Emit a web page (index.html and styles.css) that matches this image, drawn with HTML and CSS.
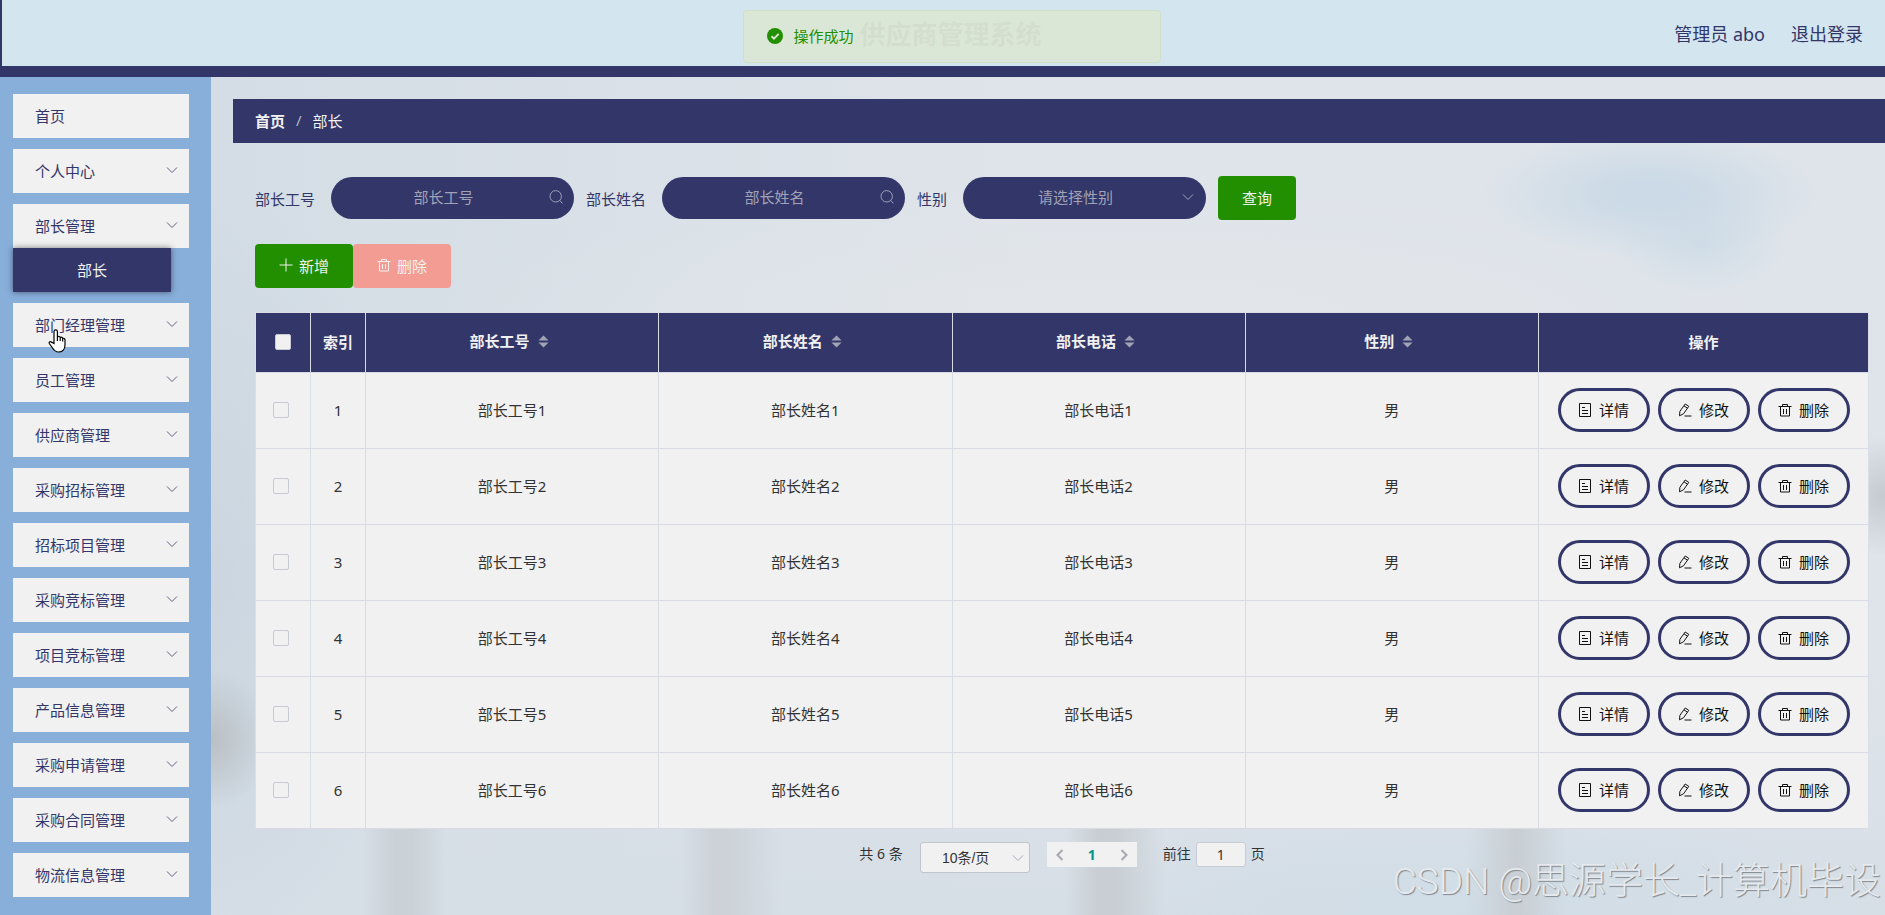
FILE: index.html
```html
<!DOCTYPE html>
<html lang="zh-CN">
<head>
  <meta charset="UTF-8">
  <title>供应商管理系统</title>
  <link rel="stylesheet" href="styles.css">
</head>
<body>
  <!-- icon sprite -->
  <svg class="sprite" aria-hidden="true">
    <symbol id="i-down" viewBox="0 0 14 14"><path d="M2 4.500l5 5 5-5"/></symbol>
    <symbol id="i-left" viewBox="0 0 14 14"><path d="M9.500 2l-5 5 5 5"/></symbol>
    <symbol id="i-right" viewBox="0 0 14 14"><path d="M4.500 2l5 5-5 5"/></symbol>
    <symbol id="i-search" viewBox="0 0 14 14"><circle cx="6.700" cy="6.300" r="5.700"/><path d="M10.800 10.400l2.600 3"/></symbol>
    <symbol id="i-plus" viewBox="0 0 14 14"><path d="M7 .5v13M.5 7h13"/></symbol>
    <symbol id="i-trash" viewBox="0 0 14 14"><path d="M.5 3.500h13M4.500 3.500v-2h5v2M2.500 3.500v9.500h9V3.500M5.500 6v5M8.500 6v5"/></symbol>
    <symbol id="i-doc" viewBox="0 0 14 14"><path d="M1.500 .5h11v13h-11zM4 4.500h3M4 7.500h6M4 10.500h6"/></symbol>
    <symbol id="i-edit" viewBox="0 0 14 14"><path d="M1.500 12.800l.4-4.500L7.200 1l3.600 2.300-5.300 7.500zM6 2.800l3.500 2.400M6.500 13h7"/></symbol>
    <symbol id="i-sort" viewBox="0 0 12 14"><path d="M6 .5l5.500 5.500H.5zM6 13.500L.5 8h11z"/></symbol>
  </svg>

  <header class="header">
    <h1 class="header-title">供应商管理系统</h1>
    <div class="header-user">
      <span>管理员 abo</span>
      <a href="#">退出登录</a>
    </div>
    <div class="message" role="alert">
      <svg class="message-icon" viewBox="0 0 16 16"><circle cx="8" cy="8" r="8"/><path d="M4.500 8.200l2.500 2.400 4.700-4.700"/></svg>
      <span>操作成功</span>
    </div>
  </header>

  <div class="layout">
    <nav class="sidebar">
      <a class="menu-item" href="#">首页</a>
      <a class="menu-item" href="#">个人中心<svg class="icon"><use href="#i-down"/></svg></a>
      <div class="menu-group">
        <a class="menu-item" href="#">部长管理<svg class="icon"><use href="#i-down"/></svg></a>
        <a class="submenu-item" href="#">部长</a>
      </div>
      <a class="menu-item" href="#">部门经理管理<svg class="icon"><use href="#i-down"/></svg></a>
      <a class="menu-item" href="#">员工管理<svg class="icon"><use href="#i-down"/></svg></a>
      <a class="menu-item" href="#">供应商管理<svg class="icon"><use href="#i-down"/></svg></a>
      <a class="menu-item" href="#">采购招标管理<svg class="icon"><use href="#i-down"/></svg></a>
      <a class="menu-item" href="#">招标项目管理<svg class="icon"><use href="#i-down"/></svg></a>
      <a class="menu-item" href="#">采购竞标管理<svg class="icon"><use href="#i-down"/></svg></a>
      <a class="menu-item" href="#">项目竞标管理<svg class="icon"><use href="#i-down"/></svg></a>
      <a class="menu-item" href="#">产品信息管理<svg class="icon"><use href="#i-down"/></svg></a>
      <a class="menu-item" href="#">采购申请管理<svg class="icon"><use href="#i-down"/></svg></a>
      <a class="menu-item" href="#">采购合同管理<svg class="icon"><use href="#i-down"/></svg></a>
      <a class="menu-item" href="#">物流信息管理<svg class="icon"><use href="#i-down"/></svg></a>
    </nav>

    <main class="main">
      <div class="breadcrumb">
        <a href="#">首页</a>
        <span class="separator">/</span>
        <span>部长</span>
      </div>

      <div class="content">
        <form class="search-form">
          <label for="gonghao">部长工号</label>
          <div class="field">
            <input type="text" id="gonghao" placeholder="部长工号">
            <svg class="icon"><use href="#i-search"/></svg>
          </div>
          <label for="xingming">部长姓名</label>
          <div class="field">
            <input type="text" id="xingming" placeholder="部长姓名">
            <svg class="icon"><use href="#i-search"/></svg>
          </div>
          <label for="xingbie">性别</label>
          <div class="field">
            <select id="xingbie">
              <option value="">请选择性别</option>
              <option>男</option>
              <option>女</option>
            </select>
            <svg class="icon"><use href="#i-down"/></svg>
          </div>
          <button type="button" class="btn btn-green">查询</button>
        </form>

        <div class="toolbar">
          <button type="button" class="btn btn-green"><svg class="icon"><use href="#i-plus"/></svg>新增</button>
          <button type="button" class="btn btn-red" disabled><svg class="icon"><use href="#i-trash"/></svg>删除</button>
        </div>

        <table class="table">
          <colgroup>
            <col class="col-small">
            <col class="col-small">
            <col>
            <col>
            <col>
            <col>
            <col class="col-actions">
          </colgroup>
          <thead>
            <tr>
              <th><input type="checkbox" aria-label="全选"></th>
              <th>索引</th>
              <th class="sortable">部长工号<svg class="sort"><use href="#i-sort"/></svg></th>
              <th class="sortable">部长姓名<svg class="sort"><use href="#i-sort"/></svg></th>
              <th class="sortable">部长电话<svg class="sort"><use href="#i-sort"/></svg></th>
              <th class="sortable">性别<svg class="sort"><use href="#i-sort"/></svg></th>
              <th>操作</th>
            </tr>
          </thead>
          <tbody>
            <tr>
              <td><input type="checkbox" aria-label="选择 1"></td>
              <td>1</td>
              <td>部长工号1</td>
              <td>部长姓名1</td>
              <td>部长电话1</td>
              <td>男</td>
              <td>
                <div class="actions">
                  <button type="button"><svg class="icon"><use href="#i-doc"/></svg>详情</button>
                  <button type="button"><svg class="icon"><use href="#i-edit"/></svg>修改</button>
                  <button type="button"><svg class="icon"><use href="#i-trash"/></svg>删除</button>
                </div>
              </td>
            </tr>
            <tr>
              <td><input type="checkbox" aria-label="选择 2"></td>
              <td>2</td>
              <td>部长工号2</td>
              <td>部长姓名2</td>
              <td>部长电话2</td>
              <td>男</td>
              <td>
                <div class="actions">
                  <button type="button"><svg class="icon"><use href="#i-doc"/></svg>详情</button>
                  <button type="button"><svg class="icon"><use href="#i-edit"/></svg>修改</button>
                  <button type="button"><svg class="icon"><use href="#i-trash"/></svg>删除</button>
                </div>
              </td>
            </tr>
            <tr>
              <td><input type="checkbox" aria-label="选择 3"></td>
              <td>3</td>
              <td>部长工号3</td>
              <td>部长姓名3</td>
              <td>部长电话3</td>
              <td>男</td>
              <td>
                <div class="actions">
                  <button type="button"><svg class="icon"><use href="#i-doc"/></svg>详情</button>
                  <button type="button"><svg class="icon"><use href="#i-edit"/></svg>修改</button>
                  <button type="button"><svg class="icon"><use href="#i-trash"/></svg>删除</button>
                </div>
              </td>
            </tr>
            <tr>
              <td><input type="checkbox" aria-label="选择 4"></td>
              <td>4</td>
              <td>部长工号4</td>
              <td>部长姓名4</td>
              <td>部长电话4</td>
              <td>男</td>
              <td>
                <div class="actions">
                  <button type="button"><svg class="icon"><use href="#i-doc"/></svg>详情</button>
                  <button type="button"><svg class="icon"><use href="#i-edit"/></svg>修改</button>
                  <button type="button"><svg class="icon"><use href="#i-trash"/></svg>删除</button>
                </div>
              </td>
            </tr>
            <tr>
              <td><input type="checkbox" aria-label="选择 5"></td>
              <td>5</td>
              <td>部长工号5</td>
              <td>部长姓名5</td>
              <td>部长电话5</td>
              <td>男</td>
              <td>
                <div class="actions">
                  <button type="button"><svg class="icon"><use href="#i-doc"/></svg>详情</button>
                  <button type="button"><svg class="icon"><use href="#i-edit"/></svg>修改</button>
                  <button type="button"><svg class="icon"><use href="#i-trash"/></svg>删除</button>
                </div>
              </td>
            </tr>
            <tr>
              <td><input type="checkbox" aria-label="选择 6"></td>
              <td>6</td>
              <td>部长工号6</td>
              <td>部长姓名6</td>
              <td>部长电话6</td>
              <td>男</td>
              <td>
                <div class="actions">
                  <button type="button"><svg class="icon"><use href="#i-doc"/></svg>详情</button>
                  <button type="button"><svg class="icon"><use href="#i-edit"/></svg>修改</button>
                  <button type="button"><svg class="icon"><use href="#i-trash"/></svg>删除</button>
                </div>
              </td>
            </tr>
          </tbody>
        </table>

        <div class="pagination">
          <span class="total">共 6 条</span>
          <div class="page-size">
            <select aria-label="每页条数">
              <option>10条/页</option>
              <option>20条/页</option>
            </select>
            <svg class="icon"><use href="#i-down"/></svg>
          </div>
          <div class="pager">
            <button type="button" aria-label="上一页" disabled><svg class="icon"><use href="#i-left"/></svg></button>
            <button type="button" class="current">1</button>
            <button type="button" aria-label="下一页" disabled><svg class="icon"><use href="#i-right"/></svg></button>
          </div>
          <div class="jump">
            <label for="page">前往</label>
            <input type="text" id="page" value="1">
            <span>页</span>
          </div>
        </div>
      </div>
    </main>
  </div>

  <div class="watermark">CSDN @思源学长_计算机毕设</div>

  <svg class="cursor" viewBox="0 0 18 24"><path d="M6 14.500V2.500a1.700 1.700 0 0 1 3.400 0V8c1-.9 2.500-.6 2.800.5 1-.6 2.300-.2 2.500.9 1-.4 2.300.1 2.300 1.600v5c0 4-2.500 7-6.500 7-3.500 0-4.800-2-6.300-4.500L1.300 14.500c-.6-1.100.6-2.300 1.800-1.600zM9.400 8v4M12.200 8.500V12M14.700 9.400V12.500"/></svg>
</body>
</html>
```

FILE: styles.css
```css
* {
  box-sizing: border-box;
}

body {
  margin: 0;
  min-height: 100vh;
  display: flex;
  flex-direction: column;
  font-family: "Noto Sans", "Noto Sans CJK SC", sans-serif;
  font-size: 15px;
  color: #333;
  overflow: hidden;
}

a {
  color: inherit;
  text-decoration: none;
}

button,
input,
select {
  font-family: inherit;
  font-size: inherit;
}

.sprite {
  display: none;
}

.icon {
  width: 14px;
  height: 14px;
  flex-shrink: 0;
  fill: none;
  stroke: currentColor;
}

/* header */
.header {
  position: relative;
  display: grid;
  grid-template-columns: 1fr auto 1fr;
  align-items: center;
  height: 77px;
  padding: 0 22px 0 36px;
  background: #d3e6f0;
  border-left: 2px solid #333668;
  border-bottom: 11px solid #333668;
  color: #333668;
}

.header-title {
  grid-column: 2;
  margin: 0;
  font-size: 26px;
  color: #8292a8;
}

.header-user {
  display: flex;
  justify-content: flex-end;
  gap: 26px;
  font-size: 18px;
}

.message {
  position: absolute;
  top: 10px;
  left: 0;
  right: 0;
  display: flex;
  align-items: center;
  gap: 11px;
  width: 418px;
  height: 53px;
  margin: 0 auto;
  padding: 0 23px 2px;
  border: 1px solid #cfe0c8;
  border-radius: 4px;
  background: rgba(220, 231, 211, 0.9);
  color: #218f00;
  translate: 8px;
}

.message-icon {
  width: 16px;
  height: 16px;
  fill: #218f00;
}

.message-icon path {
  fill: none;
  stroke: #dce7d3;
  stroke-width: 2;
}

.layout {
  flex: 1;
  display: flex;
}

/* sidebar */
.sidebar {
  display: flex;
  flex-direction: column;
  gap: 11px;
  width: 211px;
  flex-shrink: 0;
  padding: 17px 22px 17px 13px;
  background: #88aeda;
}

.menu-item {
  display: flex;
  align-items: center;
  justify-content: space-between;
  height: 44px;
  padding: 0 10px 2px 22px;
  background: #f1f1f1;
  color: #333668;
}

.menu-item .icon {
  color: #5d6082;
}

.submenu-item {
  display: block;
  width: 158px;
  line-height: 44px;
  text-align: center;
  background: #333668;
  color: #f1f1f1;
  box-shadow: 0 0 6px rgba(0, 0, 0, 0.5);
}

/* main area with a soft cloudy backdrop */
.main {
  flex: 1;
  min-width: 0;
  padding-top: 22px;
  background-color: #dce2e9;
  background-image:
    linear-gradient(90deg, transparent 9%, #cad1d7 11%, #cad1d7 12%, transparent 14%, transparent 28%, #ccd2d8 30%, #ccd2d8 31%, transparent 34%, transparent 51%, #c8ced3 53%, #c8ced3 54%, transparent 57%, transparent 75%, #c8ced3 78%, transparent 81%),
    radial-gradient(170px 65px at 86% 14%, #cbdae6 20%, transparent),
    radial-gradient(90px 50px at 89% 20%, #d0dde7, transparent),
    radial-gradient(60px 70px at 0 79%, #b9c0c4, transparent),
    radial-gradient(60px 60px at 100% 50%, #c4cad0, transparent),
    radial-gradient(200px 400px at 0 60%, #cbd6e0, transparent),
    radial-gradient(700px 150px at 55% 30%, #e2e6ea, transparent),
    radial-gradient(400px 120px at 75% 100%, #d0dde7, transparent),
    linear-gradient(transparent 70%, #d6dee6),
    linear-gradient(90deg, #d4dde5, #dfe4ea 50%, #dfe4ea);
  background-size: 100% 90px, auto, auto, auto, auto, auto, auto, auto, auto, auto;
  background-position: left bottom, 0 0, 0 0, 0 0, 0 0, 0 0, 0 0, 0 0, 0 0, 0 0;
  background-repeat: no-repeat;
}

.breadcrumb {
  display: flex;
  align-items: center;
  gap: 11px;
  height: 44px;
  margin-left: 22px;
  padding: 0 22px 2px;
  background: #333668;
  color: #f1f1f1;
}

.breadcrumb a {
  font-weight: bold;
}

.separator {
  color: #b4b7c6;
}

.content {
  padding: 33px 16px 0 44px;
}

.search-form {
  display: flex;
  align-items: center;
  color: #333668;
}

.search-form label {
  margin-right: 16px;
}

.field {
  position: relative;
  width: 243px;
  margin-right: 12px;
  color: #a0a3b8;
}

.field input,
.field select {
  display: block;
  width: 100%;
  height: 42px;
  padding: 0 32px 2px 14px;
  border: 0;
  border-radius: 21px;
  background: #333668;
  color: #a0a3b8;
  text-align: center;
  text-align-last: center;
  appearance: none;
  outline: none;
}

.field input::placeholder {
  color: #a0a3b8;
}

.field .icon {
  position: absolute;
  top: 13px;
  right: 11px;
}

.btn {
  display: flex;
  align-items: center;
  gap: 6px;
  height: 44px;
  padding: 0 24px 2px;
  border: 0;
  border-radius: 4px;
  color: #f1f1f1;
}

.btn-green {
  background: #218f00;
}

.btn-red {
  background: #f39c93;
}

.toolbar {
  display: flex;
  margin: 24px 0;
}

/* table */
.table {
  width: 100%;
  table-layout: fixed;
  border-spacing: 0;
  border: 1px solid #dadee6;
  border-bottom: 0;
  background: #f1f1f1;
}

.col-small {
  width: 55px;
}

.col-actions {
  width: 329px;
}

.table th,
.table td {
  padding: 0 0 2px;
  text-align: center;
  border-right: 1px solid #d8dde5;
  border-bottom: 1px solid #d8dbe4;
}

.table th {
  height: 60px;
  background: #333668;
  color: #f1f1f1;
}

.table td {
  height: 76px;
}

.table th.sortable {
  padding: 0 6px 4px 0;
}

.table th:last-child,
.table td:last-child {
  border-right: 0;
}

.table input {
  display: block;
  appearance: none;
  width: 16px;
  height: 16px;
  margin: 0 auto 0 17px;
  border: 1px solid #c8cad4;
  border-radius: 2px;
  background: #f1f1f1;
}

.table th input {
  margin: 0 auto;
}

.sort {
  width: 11px;
  height: 13px;
  margin-left: 8px;
  vertical-align: -1px;
  fill: #9fa3b4;
}

.actions {
  display: flex;
  justify-content: center;
  gap: 8px;
}

.actions button {
  display: flex;
  align-items: center;
  justify-content: center;
  gap: 7px;
  width: 92px;
  height: 44px;
  padding: 0;
  border: 3px solid #333668;
  border-radius: 22px;
  background: transparent;
  color: #111;
}

/* pagination */
.pagination {
  display: flex;
  justify-content: center;
  align-items: flex-start;
  padding-top: 13px;
  font-size: 14px;
  line-height: 24px;
}

.page-size {
  position: relative;
  margin: 0 17px;
  color: #a9acb8;
}

.page-size select {
  display: block;
  width: 110px;
  height: 31px;
  padding: 0 32px 0 14px;
  border: 1px solid #c0c4cc;
  border-radius: 3px;
  background: #f1f1f1;
  color: #333;
  font-family: "Liberation Sans", "Noto Sans CJK SC", sans-serif;
  text-align-last: center;
  appearance: none;
}

.page-size .icon {
  position: absolute;
  top: 9px;
  right: 5px;
}

.pager {
  display: flex;
  height: 25px;
  margin-right: 26px;
  background: #f1f1f1;
}

.pager button {
  display: flex;
  align-items: center;
  justify-content: center;
  width: 26px;
  padding: 0;
  border: 0;
  background: none;
  color: #a5a8b2;
}

.pager .icon {
  stroke-width: 2;
}

.pager .current {
  width: 38px;
  font-weight: bold;
  color: #009688;
}

.jump {
  display: flex;
  gap: 5px;
}

.jump input {
  width: 50px;
  height: 25px;
  padding: 0;
  border: 1px solid #c8cad4;
  border-radius: 3px;
  background: #f1f1f1;
  color: #333;
  text-align: center;
}

.watermark {
  position: absolute;
  right: 4px;
  bottom: 8px;
  font-family: Roboto, "Noto Sans CJK SC", sans-serif;
  font-size: 37px;
  font-weight: 300;
  line-height: 50px;
  color: #e6eaee;
  text-shadow: 1px 1px 1px #7f868c;
}

.cursor {
  position: absolute;
  top: 329px;
  left: 48px;
  width: 18px;
  height: 24px;
  fill: #fff;
  stroke: #000;
  stroke-width: 1.2;
}
```
